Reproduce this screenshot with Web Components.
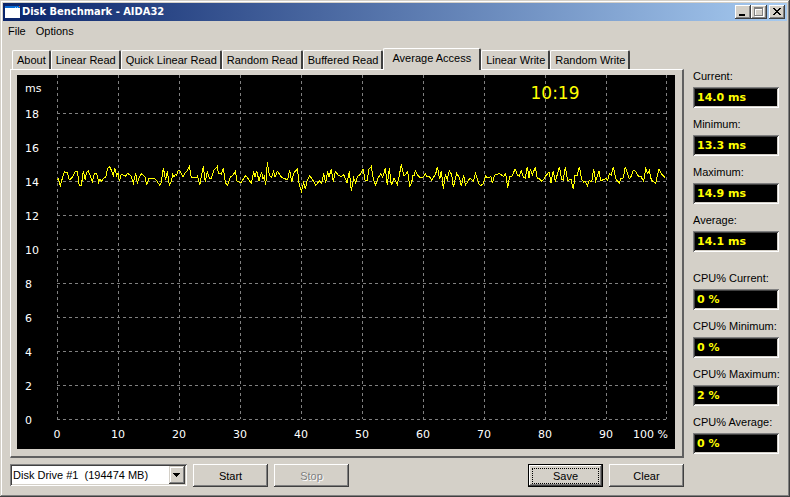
<!DOCTYPE html>
<html lang="en">
<head>
<meta charset="utf-8">
<title>Disk Benchmark - AIDA32</title>
<style>
  body {
    margin: 0;
    background: #d4d0c8;
    color: #000;
    font: 11px/14px "Liberation Sans", Arial, sans-serif;
  }

  .actions {
    display: flex;
    gap: 6px;
    margin-top: 6px;
    align-items: flex-start;
  }

  .spacer {
    flex: 1;
  }
</style>
</head>
<body>

<app-window title="Disk Benchmark - AIDA32">
  <app-menu slot="menu" items="File,Options"></app-menu>

  <tab-panel tabs="About,Linear Read,Quick Linear Read,Random Read,Buffered Read,Average Access,Linear Write,Random Write" selected="Average Access">
    <access-chart time="10:19"></access-chart>
  </tab-panel>

  <div class="actions">
    <drive-select label="Drive" options="Disk Drive #1&nbsp; (194474 MB)"></drive-select>
    <push-button>Start</push-button>
    <push-button disabled>Stop</push-button>
    <span class="spacer"></span>
    <push-button default>Save</push-button>
    <push-button>Clear</push-button>
  </div>

  <readout-group slot="side">
    <value-readout label="Current:">14.0 ms</value-readout>
    <value-readout label="Minimum:">13.3 ms</value-readout>
    <value-readout label="Maximum:">14.9 ms</value-readout>
    <value-readout label="Average:">14.1 ms</value-readout>
  </readout-group>
  <readout-group slot="side">
    <value-readout label="CPU% Current:">0 %</value-readout>
    <value-readout label="CPU% Minimum:">0 %</value-readout>
    <value-readout label="CPU% Maximum:">2 %</value-readout>
    <value-readout label="CPU% Average:">0 %</value-readout>
  </readout-group>
</app-window>

<script>
class AppWindow extends HTMLElement {
  constructor() {
    super();
    this.attachShadow({ mode: "open" });

    this.shadowRoot.innerHTML = `
      <style>
        :host {
          display: block;
          box-sizing: border-box;
          min-height: 100vh;
          padding: 3px;
          background: #d4d0c8;
          box-shadow: inset -1px -1px #404040, inset 1px 1px #d4d0c8,
            inset -2px -2px #808080, inset 2px 2px #fff;
        }

        header {
          display: flex;
          align-items: center;
          height: 18px;
          padding: 0 2px;
          background: linear-gradient(to right, #0a246a, #a6caf0);
          color: #fff;
        }

        h1 {
          flex: 1;
          margin: 0 0 0 2px;
          font: bold 11px/18px "DejaVu Sans Condensed", "DejaVu Sans", sans-serif;
        }

        header button {
          width: 16px;
          height: 14px;
          padding: 0;
          border: 0;
          background: #d4d0c8;
          box-shadow: inset -1px -1px #404040, inset 1px 1px #fff, inset -2px -2px #808080;
        }

        header button:last-child {
          margin-left: 2px;
        }

        svg {
          display: block;
        }

        main {
          display: grid;
          grid-template-columns: minmax(0, 1fr) 86px;
          gap: 9px;
          padding: 7px 8px 7px 7px;
        }

        aside {
          display: flex;
          flex-direction: column;
          gap: 19px;
          padding-top: 21px;
        }
      </style>

      <header>
        <svg width="15" height="12" viewBox="0 0 15 12" shape-rendering="crispEdges">
          <path fill="#fff" d="M0 0h15v12H0z"/>
          <path fill="#0a6cd6" d="M0 0h15v2H0z"/>
          <path fill="#7cc4ff" d="M10 1h1v1h-1zM12 1h1v1h-1z"/>
          <path fill="#e06030" d="M14 0h1v1h-1z"/>
        </svg>
        <h1></h1>
        <button aria-label="Minimize">
          <svg width="16" height="14" shape-rendering="crispEdges"><path d="M4 9h6v2H4z"/></svg>
        </button>
        <button aria-label="Maximize" disabled>
          <svg width="16" height="14" shape-rendering="crispEdges">
            <path fill="#fff" d="M4 3h9v9H4z"/>
            <path fill="#808080" d="M3 2h9v9H3z"/>
            <path fill="#fff" d="M4 4h7v6H4z"/>
            <path fill="#d4d0c8" d="M5 5h6v5H5z"/>
          </svg>
        </button>
        <button aria-label="Close">
          <svg width="16" height="14" shape-rendering="crispEdges">
            <path d="M4 3h2v1H4zM10 3h2v1h-2zM5 4h2v1H5zM9 4h2v1H9zM6 5h4v1H6zM7 6h2v1H7zM6 7h4v1H6zM5 8h2v1H5zM9 8h2v1H9zM4 9h2v1H4zM10 9h2v1h-2z"/>
          </svg>
        </button>
      </header>
      <slot name="menu"></slot>
      <main>
        <section><slot></slot></section>
        <aside><slot name="side"></slot></aside>
      </main>
    `;
  }

  connectedCallback() {
    this.shadowRoot.querySelector("h1").textContent = this.getAttribute("title");
  }
}

class AppMenu extends HTMLElement {
  connectedCallback() {
    this.attachShadow({ mode: "open" });

    const items = this.getAttribute("items").split(",");
    this.shadowRoot.innerHTML = `
      <style>
        :host {
          display: flex;
          height: 20px;
        }

        button {
          padding: 0 5px;
          border: 0;
          background: none;
          color: inherit;
          font: inherit;
        }
      </style>
      ${items.map((item) => `<button>${item}</button>`).join("")}
    `;
  }
}

class TabPanel extends HTMLElement {
  connectedCallback() {
    this.attachShadow({ mode: "open" });

    const selected = this.getAttribute("selected");
    const tabs = this.getAttribute("tabs").split(",");
    this.shadowRoot.innerHTML = `
      <style>
        :host {
          display: block;
        }

        nav {
          display: flex;
          align-items: flex-end;
          height: 21px;
          padding-left: 2px;
        }

        button {
          height: 19px;
          padding: 0 3px 0 4px;
          border: 1px solid #fff;
          border-right: 2px solid #404040;
          border-bottom: 0;
          border-radius: 2px 2px 0 0;
          background: #d4d0c8;
          color: inherit;
          font: inherit;
          white-space: nowrap;
        }

        button[aria-selected="true"] {
          height: 22px;
          margin-bottom: -1px;
          padding: 0 8px 4px;
        }

        .page {
          padding: 5px 7px 7px 6px;
          border: solid;
          border-width: 1px 2px 2px 1px;
          border-color: #fff #606060 #606060 #fff;
        }
      </style>
      <nav role="tablist">
        ${tabs.map((tab) => `<button role="tab" aria-selected="${tab === selected}">${tab}</button>`).join("")}
      </nav>
      <div class="page" role="tabpanel"><slot></slot></div>
    `;
  }
}

// Trace pieces: left/top offset of each piece, points in thirds of a unit
const TRACE = [
  [33, 75, "22,90 25,86 31,108 37,85 43,65 52,68 58,90 66,83 75,65 82,64 88,108 94,106 100,64 106,90 109,68 115,62 127,96 133,72 140,70 146,97 150,86 154,94 163,82 167,82 172,58 178,49 184,60 190,76 194,54 200,78 204,68 208,94 214,72 226,79 233,70 243,78 250,100 257,70 262,98 268,82 275,70 286,83 290,106 297,84 312,84 320,92 329,106 334,96 340,54 347,90 352,64 358,106 364,94 368,74 372,82 376,74 380,76 384,62 389,62 399,82 404,70 412,62 418,49 424,82 440,82 443,78 449,106 460,49 466,96"],
  [188, 75, "1,96 7,64 13,84 19,84 26,62 37,49 40,70 49,72 55,54 61,98 68,106 76,80 84,76 91,64 96,94 108,98 122,76 139,100 146,64 150,82 155,62 162,92 170,66 174,88 178,80 182,106 187,37 193,76 200,82 206,64 210,82 217,64 230,82 248,90 254,60 260,96 266,70 277,56 283,106 289,124 296,98 301,118 306,94 313,78 320,84 332,106 344,92 350,100 356,70 362,100 368,64 372,80 379,58 385,96 391,64 400,76 408,80 416,74 426,98 433,64 439,124 446,84 452,98 458,78 465,74"],
  [343, 75, "0,74 9,56 15,90 21,92 27,58 34,49 40,88 46,106 54,84 62,72 68,82 76,54 82,106 88,54 94,106 102,84 112,104 118,76 124,43 131,76 137,74 143,64 149,108 155,100 158,76 162,78 166,62 173,76 179,82 189,82 196,72 201,80 208,80 215,90 227,72 232,50 239,88 244,62 250,118 256,74 262,88 268,62 275,74 280,112 290,70 298,82 304,108 311,76 316,106 330,84 340,94 346,70 356,100 361,106 368,104 377,78 382,84 393,80 397,100 403,76 418,70 431,80 437,70 443,114 449,80 456,78 466,56"],
  [498, 75, "1,56 7,76 13,78 19,62 25,82 31,84 37,50 42,84 46,56 52,76 61,50 67,86 73,86 80,94 86,88 92,78 102,66 108,98 115,62 121,96 133,50 140,88 145,90 151,50 158,92 168,88 175,118 180,76 187,76 193,50 200,88 206,96 211,94 217,108 222,92 230,96 236,56 242,92 252,64 257,92 274,86 278,92 283,70 289,76 295,50 303,88 313,98 317,86 325,84 331,50 343,86 348,80 355,60 363,66 370,78 377,78 386,94 392,56 398,70 403,62 409,90 422,100 432,56 440,72 450,82"]
];

class AccessChart extends HTMLElement {
  connectedCallback() {
    this.attachShadow({ mode: "open" });

    const left = 40;
    const right = 649;
    const bottom = 344;
    let grid = "";
    let labels = "";

    for (let i = 0; i <= 10; i++) {
      const x = Math.min(left + i * 61, right);
      grid += `<rect x="${x}" y="0" width="1" height="${bottom}" fill="url(#down)"/>`;
      if (i < 10) {
        labels += `<text x="${x}" y="363" text-anchor="middle">${i * 10}</text>`;
      }
    }
    for (let i = 0; i < 10; i++) {
      const y = bottom - i * 34;
      grid += `<rect x="${left}" y="${y}" width="${right - left}" height="1" fill="url(#across)"/>`;
      labels += `<text x="8" y="${y + 5}">${i * 2}</text>`;
    }

    this.shadowRoot.innerHTML = `
      <style>
        :host {
          display: block;
          background: #000;
        }

        svg {
          display: block;
          width: 100%;
          height: auto;
        }

        text {
          fill: #fff;
          font: 11px "DejaVu Sans", Verdana, sans-serif;
        }

        .time {
          fill: #ff0;
          font-size: 17px;
        }
      </style>
      <svg viewBox="0 0 658 374" role="img" aria-label="Average access time">
        <defs>
          <pattern id="across" x="40" width="6" height="6" patternUnits="userSpaceOnUse">
            <rect width="3" height="6" fill="#808080"/>
          </pattern>
          <pattern id="down" width="6" height="6" patternUnits="userSpaceOnUse">
            <rect width="6" height="3" fill="#808080"/>
          </pattern>
        </defs>
        <g shape-rendering="crispEdges">
          ${grid}
          ${TRACE.map(([x, y, points]) => `
            <g transform="translate(${x} ${y}) scale(${1 / 3})">
              <polyline points="${points}" fill="none" stroke="#ff0" stroke-width="3"/>
            </g>`).join("")}
        </g>
        <text x="8" y="17">ms</text>
        ${labels}
        <text x="651" y="363" text-anchor="end">100 %</text>
        <text class="time" x="538" y="24" text-anchor="middle">${this.getAttribute("time")}</text>
      </svg>
    `;
  }
}

class DriveSelect extends HTMLElement {
  connectedCallback() {
    this.attachShadow({ mode: "open" });

    const options = this.getAttribute("options").split(",");
    this.shadowRoot.innerHTML = `
      <style>
        :host {
          display: grid;
          grid-template-columns: 1fr 16px;
          box-sizing: border-box;
          width: 177px;
          height: 22px;
          padding: 2px;
          background: #fff;
          box-shadow: inset 1px 1px #808080, inset -1px -1px #fff,
            inset 2px 2px #404040, inset -2px -2px #d4d0c8;
        }

        select {
          grid-area: 1 / 1 / 2 / 3;
          appearance: none;
          padding: 0 1px;
          border: 0;
          background: none;
          color: inherit;
          font: inherit;
        }

        svg {
          grid-area: 1 / 2;
          pointer-events: none;
          background: #d4d0c8;
          box-shadow: inset -1px -1px #404040, inset 1px 1px #d4d0c8,
            inset -2px -2px #808080, inset 2px 2px #fff;
        }
      </style>
      <select aria-label="${this.getAttribute("label")}">
        ${options.map((option) => `<option>${option}</option>`).join("")}
      </select>
      <svg width="16" height="18" shape-rendering="crispEdges">
        <path d="M4 7h7v1H4zM5 8h5v1H5zM6 9h3v1H6zM7 10h1v1H7z"/>
      </svg>
    `;
  }
}

class PushButton extends HTMLElement {
  connectedCallback() {
    this.attachShadow({ mode: "open" });

    this.shadowRoot.innerHTML = `
      <style>
        :host {
          display: block;
        }

        button {
          display: grid;
          place-items: center;
          width: 75px;
          height: 23px;
          padding: 0;
          border: 0;
          background: #d4d0c8;
          color: inherit;
          font: inherit;
          box-shadow: inset -1px -1px #404040, inset 1px 1px #fff, inset -2px -2px #808080;
        }

        button:disabled {
          color: #808080;
          text-shadow: 1px 1px #fff;
        }

        :host([default]) button {
          border: 1px solid #000;
        }

        :host([default]) span {
          box-sizing: border-box;
          width: 67px;
          border: 1px dotted #000;
        }
      </style>
      <button ${this.hasAttribute("disabled") ? "disabled" : ""}><span><slot></slot></span></button>
    `;
  }
}

class ReadoutGroup extends HTMLElement {
  constructor() {
    super();
    this.attachShadow({ mode: "open" });

    this.shadowRoot.innerHTML = `
      <style>
        :host {
          display: flex;
          flex-direction: column;
          gap: 9px;
        }
      </style>
      <slot></slot>
    `;
  }
}

class ValueReadout extends HTMLElement {
  connectedCallback() {
    this.attachShadow({ mode: "open" });

    this.shadowRoot.innerHTML = `
      <style>
        :host {
          display: block;
        }

        label {
          display: block;
          margin-bottom: 4px;
          white-space: nowrap;
        }

        output {
          display: block;
          box-sizing: border-box;
          height: 21px;
          padding: 0 4px;
          background: #000;
          color: #ff0;
          font: bold 11px/21px "DejaVu Sans", Verdana, sans-serif;
          box-shadow: inset 1px 1px #808080, inset -1px -1px #fff,
            inset 2px 2px #404040, inset -2px -2px #d4d0c8;
        }
      </style>
      <label for="value">${this.getAttribute("label")}</label>
      <output id="value"><slot></slot></output>
    `;
  }
}

customElements.define("app-window", AppWindow);
customElements.define("app-menu", AppMenu);
customElements.define("tab-panel", TabPanel);
customElements.define("access-chart", AccessChart);
customElements.define("drive-select", DriveSelect);
customElements.define("push-button", PushButton);
customElements.define("readout-group", ReadoutGroup);
customElements.define("value-readout", ValueReadout);
</script>
</body>
</html>
